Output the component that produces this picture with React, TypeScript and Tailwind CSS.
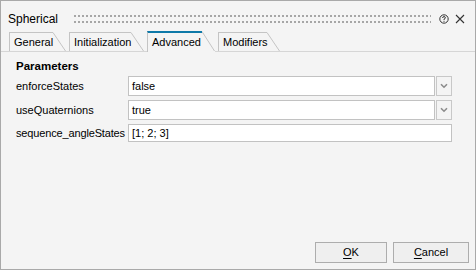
import React from "react";

type TabProps = { label: string; width: string; active?: boolean };

const gripCols = Array.from({ length: 90 }, (_, i) => i * 4);

function Tab({ label, width, active }: TabProps) {
  if (active) {
    return (
      <div className="relative z-10 -mb-px flex h-[21px] bg-[#f4f4f4]">
        <div className={`${width} border-l border-t-2 border-l-[#c4c4c4] border-t-[#0e79a8] pl-[4px] leading-[18px]`}>
          {label}
        </div>
        <svg width="13" height="21" className="shrink-0">
          <line x1="0" y1="0.5" x2="12.5" y2="20" stroke="#c4c4c4" strokeWidth="1" />
        </svg>
      </div>
    );
  }
  return (
    <div className="flex h-[19px]">
      <div className={`${width} border-l border-t border-[#c4c4c4] pl-[4px] leading-[19px]`}>{label}</div>
      <svg width="13" height="19" className="shrink-0">
        <line x1="0" y1="0.5" x2="12.5" y2="19" stroke="#c4c4c4" strokeWidth="1" />
      </svg>
    </div>
  );
}

function ComboRow({ label, value }: { label: string; value: string }) {
  return (
    <div className="flex h-[20px] items-center">
      <div className="w-[112px] whitespace-nowrap">{label}</div>
      <div className="flex h-[20px] w-[324px] gap-px">
        <div className="flex-1 border border-[#c2c2c2] bg-white pl-[3px] leading-[18px]">{value}</div>
        <div className="flex w-[16px] items-center justify-center border border-[#c8c8c8] bg-[#f4f4f4]">
          <svg width="8" height="6" viewBox="0 0 8 6">
            <path d="M1 1.2 L4 4.2 L7 1.2" fill="none" stroke="#8c8c8c" strokeWidth="1.6" />
          </svg>
        </div>
      </div>
    </div>
  );
}

export default function App() {
  return (
    <div className="flex h-[270px] w-[476px] flex-col border border-[#a9a9a9] bg-[#f4f4f4] font-['Liberation_Sans',Arial,sans-serif] text-[11px] text-black">
      {/* Title bar */}
      <div className="flex h-[30px] items-center pl-[7px] pr-[10px] pt-[4px]">
        <span className="w-[66px] pt-[2px] text-[12px]">Spherical</span>
        <svg width="357" height="9" className="mt-[2px] shrink-0">
          {gripCols.map((x) => (
            <g key={x} fill="#a6a6a6">
              <rect x={x} y="0" width="2" height="2" />
              <rect x={x} y="6" width="2" height="2" />
            </g>
          ))}
        </svg>
        <svg width="10" height="10" viewBox="0 0 10 10" className="ml-auto mt-[2px]">
          <circle cx="5" cy="5" r="4.2" fill="none" stroke="#333" strokeWidth="1" />
          <path d="M3.6 4 Q3.6 2.6 5 2.6 Q6.4 2.6 6.4 3.8 Q6.4 4.6 5 5.2 L5 6" fill="none" stroke="#333" strokeWidth="1" />
          <rect x="4.5" y="6.8" width="1" height="1" fill="#333" />
        </svg>
        <svg width="10" height="10" viewBox="0 0 10 10" className="ml-[6px] mt-[2px]">
          <path d="M1 1 L9 9 M9 1 L1 9" stroke="#333" strokeWidth="1.1" />
        </svg>
      </div>

      {/* Tabs */}
      <div className="flex h-[21px] items-end gap-[3px] border-b border-[#d6d6d6] pl-[8px]">
        <Tab label="General" width="w-[44px]" />
        <Tab label="Initialization" width="w-[62px]" />
        <Tab label="Advanced" width="w-[55px]" active />
        <Tab label="Modifiers" width="w-[49px]" />
      </div>

      {/* Parameters */}
      <div className="flex flex-col gap-[4px] pl-[15px] pt-[7px]">
        <div className="mb-[-1px] text-[11.5px] font-bold leading-[14px]">Parameters</div>
        <ComboRow label="enforceStates" value="false" />
        <ComboRow label="useQuaternions" value="true" />
        <div className="flex h-[18px] items-center">
          <div className="w-[112px] whitespace-nowrap tracking-[-0.15px]">sequence_angleStates</div>
          <div className="h-[18px] w-[324px] border border-[#c2c2c2] bg-white pl-[3px] leading-[16px]">[1; 2; 3]</div>
        </div>
      </div>

      {/* Buttons */}
      <div className="mt-auto flex justify-end gap-[6px] pb-[6px] pr-[6px]">
        <button className="h-[21px] w-[72px] border border-[#adadad] bg-[#efefef] leading-[19px]">
          <span className="underline underline-offset-2">O</span>K
        </button>
        <button className="h-[21px] w-[76px] border border-[#adadad] bg-[#efefef] leading-[19px]">
          <span className="underline underline-offset-2">C</span>ancel
        </button>
      </div>
    </div>
  );
}
